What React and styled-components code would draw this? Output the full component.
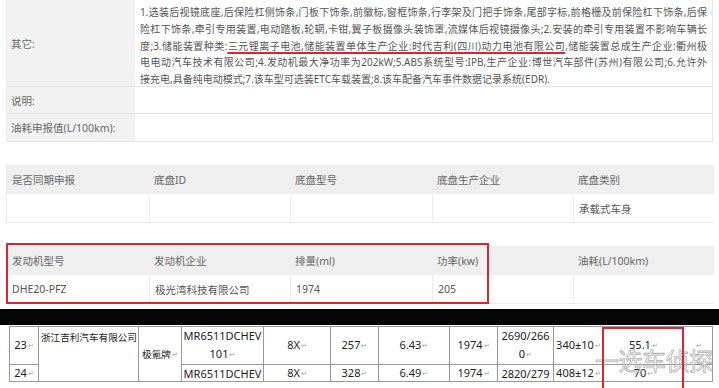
import React from 'react'
import styled, { createGlobalStyle } from 'styled-components'

const GlobalStyle = createGlobalStyle`
  html, body {
    margin: 0;
    padding: 0;
    background: #fff;
  }
  body {
    font-family: 'Noto Sans', 'Noto Sans CJK SC', sans-serif;
    color: #555;
    overflow: hidden;
  }
  * {
    box-sizing: border-box;
  }
`

const Screen = styled.div`
  width: 719px;
  height: 388px;
  overflow: hidden;
  background: #fff;
`

const Upper = styled.div`
  padding: 0 6px;
  width: 719px;
`

const InfoTable = styled.div`
  width: 707px;
  display: grid;
  grid-template-columns: 128px 1fr;
  grid-template-rows: 87px 27px 28px;
  border-right: 1px solid #e8e8e8;
  border-left: 1px solid #ececec;
`

const InfoLabel = styled.div`
  background: #f2f2f2;
  display: flex;
  align-items: center;
  padding-left: 4px;
  font-size: 10.5px;
  color: #666;
  border-bottom: 1px solid #e6e6e6;
`

const InfoValue = styled.div`
  background: #fff;
  padding: 4px 5px 0 5px;
  font-size: 10px;
  line-height: 16.75px;
  color: #555;
  border-bottom: 1px solid #e6e6e6;
  overflow: hidden;
`

const Line = styled.div`
  white-space: nowrap;
  text-align: justify;
  text-align-last: ${(p) => (p.$last ? 'left' : 'justify')};
`

const Marked = styled.span`
  text-decoration: underline;
  text-decoration-color: #d7262d;
  text-decoration-thickness: 2px;
  text-underline-offset: 2px;
`

const DataTable = styled.div`
  position: relative;
  width: 707px;
  margin-top: ${(p) => p.$top}px;
  display: grid;
  grid-template-columns: 142px 141px 142px 141px 141px;
  grid-template-rows: 29px 28px;
  border: 1px solid #ebebeb;
  border-top: none;
`

const HeadCell = styled.div`
  background: #efefef;
  display: flex;
  align-items: center;
  padding-left: 5px;
  font-size: 10.5px;
  color: #666;
`

const BodyCell = styled.div`
  background: #fff;
  display: flex;
  align-items: center;
  padding-left: 5px;
  font-size: 10.5px;
  color: #555;
  border-left: ${(p) => (p.$first ? 'none' : '1px solid #ebebeb')};
`

const RedFrame = styled.div`
  position: absolute;
  border: 2px solid #d8262f;
  pointer-events: none;
`

const EngineFrame = styled(RedFrame)`
  left: -1px;
  top: -3px;
  width: 483px;
  height: 61px;
`

const Band = styled.div`
  margin-top: 5px;
  height: 16px;
  width: 719px;
  background: #050505;
`

const WordDoc = styled.div`
  position: relative;
  height: 65px;
  padding: 1px 0 0 9px;
  background: #fff;
`

const WordTable = styled.table`
  table-layout: fixed;
  border-collapse: collapse;
  width: 703px;
  font-size: 11px;
  color: #222;
  td {
    border: 1px solid #9a9a9a;
    padding: 0 1px;
    text-align: center;
    vertical-align: middle;
    white-space: nowrap;
    overflow: hidden;
  }
`

const TallRow = styled.tr`
  height: 38px;
  line-height: 18px;
`

const ShortRow = styled.tr`
  height: 16px;
  line-height: 15px;
`

const CompanyCell = styled.td`
  && {
    text-align: left;
    vertical-align: top;
    padding-top: 1px;
    padding-left: 2px;
  }
`

const Cjk = styled.span`
  font-size: 9.6px;
`

const Ret = styled.span`
  font-size: 7px;
  color: #9c9c9c;
  margin-left: 1px;
  vertical-align: 1px;
`

const ColumnFrame = styled(RedFrame)`
  left: 602px;
  top: 2px;
  width: 82px;
  height: 80px;
`

const Watermark = styled.div`
  position: absolute;
  left: 595px;
  top: 17px;
  font-family: 'Noto Sans CJK SC', sans-serif;
  font-size: 24px;
  letter-spacing: -0.5px;
  color: rgba(255, 255, 255, 0.55);
  -webkit-text-stroke: 0.8px rgba(150, 150, 150, 0.75);
  white-space: nowrap;
  pointer-events: none;
`

const otherLines = [
  '1.选装后视镜底座,后保险杠侧饰条,门板下饰条,前徽标,窗框饰条,行李架及门把手饰条,尾部字标,前格栅及前保险杠下饰条,后保',
  '险杠下饰条,牵引专用装置,电动踏板,轮辋,卡钳,翼子板摄像头装饰罩,流媒体后视镜摄像头;2.安装的牵引专用装置不影响车辆长',
  null,
  '电电动汽车技术有限公司;4.发动机最大净功率为202kW;5.ABS系统型号:IPB,生产企业:博世汽车部件(苏州)有限公司;6.允许外',
  '接充电,具备纯电动模式;7.该车型可选装ETC车载装置;8.该车配备汽车事件数据记录系统(EDR).',
]

const chassis = {
  head: ['是否同期申报', '底盘ID', '底盘型号', '底盘生产企业', '底盘类别'],
  body: ['', '', '', '', '承载式车身'],
}

const engine = {
  head: ['发动机型号', '发动机企业', '排量(ml)', '功率(kw)', '油耗(L/100km)'],
  body: ['DHE20-PFZ', '极光湾科技有限公司', '1974', '205', ''],
}

const widths = [29, 100, 43, 82, 67, 48, 71, 48, 56, 50, 80, 29]

const Grid = ({ data, top, children }) => (
  <DataTable $top={top}>
    {data.head.map((h) => (
      <HeadCell key={h}>{h}</HeadCell>
    ))}
    {data.body.map((b, i) => (
      <BodyCell key={i} $first={i === 0}>
        {b}
      </BodyCell>
    ))}
    {children}
  </DataTable>
)

const App = () => {
  return (
    <Screen>
      <GlobalStyle />
      <Upper>
        <InfoTable>
          <InfoLabel>其它:</InfoLabel>
          <InfoValue>
            {otherLines.map((line, i) =>
              line === null ? (
                <Line key={i}>
                  度;3.储能装置种类:
                  <Marked>三元锂离子电池,储能装置单体生产企业:时代吉利(四川)动力电池有限公司</Marked>
                  ,储能装置总成生产企业:衢州极
                </Line>
              ) : (
                <Line key={i} $last={i === otherLines.length - 1}>
                  {line}
                </Line>
              )
            )}
          </InfoValue>
          <InfoLabel>说明:</InfoLabel>
          <InfoValue />
          <InfoLabel>油耗申报值(L/100km):</InfoLabel>
          <InfoValue />
        </InfoTable>

        <Grid data={chassis} top={23} />
        <Grid data={engine} top={23}>
          <EngineFrame />
        </Grid>
      </Upper>

      <Band />

      <WordDoc>
        <WordTable>
          <colgroup>
            {widths.map((w, i) => (
              <col key={i} style={{ width: w }} />
            ))}
          </colgroup>
          <tbody>
            <TallRow>
              <td>23<Ret>↵</Ret></td>
              <CompanyCell rowSpan={2}>
                <Cjk>浙江吉利汽车有限公司</Cjk>
                <Ret>↵</Ret>
              </CompanyCell>
              <td rowSpan={2}>
                <Cjk>极氪牌</Cjk>
                <Ret>↵</Ret>
              </td>
              <td>
                MR6511DCHEV
                <br />
                101<Ret>↵</Ret>
              </td>
              <td>8X<Ret>↵</Ret></td>
              <td>257<Ret>↵</Ret></td>
              <td>6.43<Ret>↵</Ret></td>
              <td>1974<Ret>↵</Ret></td>
              <td>
                2690/266
                <br />
                0<Ret>↵</Ret>
              </td>
              <td>340±10<Ret>↵</Ret></td>
              <td>55.1<Ret>↵</Ret></td>
              <td><Ret>↵</Ret></td>
            </TallRow>
            <ShortRow>
              <td>24<Ret>↵</Ret></td>
              <td>MR6511DCHEV</td>
              <td>8X<Ret>↵</Ret></td>
              <td>328<Ret>↵</Ret></td>
              <td>6.49<Ret>↵</Ret></td>
              <td>1974<Ret>↵</Ret></td>
              <td>2820/279</td>
              <td>408±12<Ret>↵</Ret></td>
              <td>70<Ret>↵</Ret></td>
              <td></td>
            </ShortRow>
          </tbody>
        </WordTable>
        <Watermark>一选车侦探</Watermark>
        <ColumnFrame />
      </WordDoc>
    </Screen>
  )
}

export default App
